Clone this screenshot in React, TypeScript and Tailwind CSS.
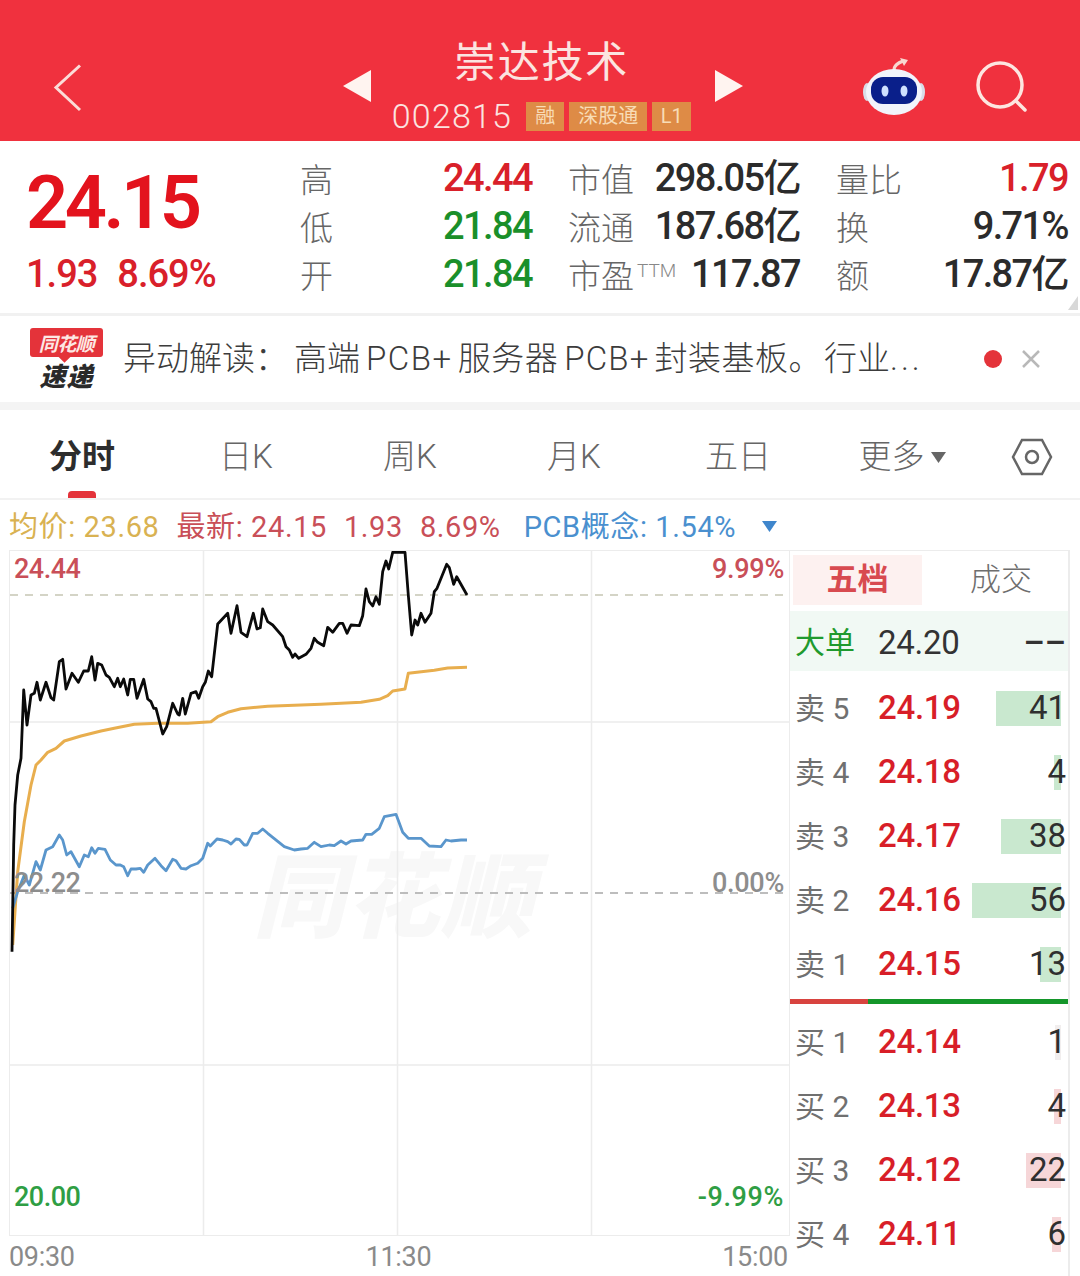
const CJK = "font-['Roboto','Noto_Sans_CJK_SC',sans-serif]";

const toPts = (a: number[], ox = 9, oy = 551 - 545) => {
  const out: string[] = [];
  for (let i = 0; i < a.length; i += 2) out.push(`${(a[i] / 3 - ox).toFixed(1)},${(a[i + 1] / 3 - oy).toFixed(1)}`);
  return out.join(" ");
};

const black = [33,1220,38,900,42,780,50,690,60,640,68,435,78,540,90,450,100,445,108,412,118,465,135,412,150,458,158,465,175,350,185,343,195,432,213,385,232,412,248,378,262,378,272,335,282,405,290,355,302,360,315,390,325,397,340,425,350,400,358,425,368,402,380,450,388,403,398,403,408,460,428,403,440,462,450,470,458,490,465,490,485,567,497,545,515,475,530,507,535,510,545,460,553,507,570,445,585,440,593,460,605,425,613,412,622,378,632,395,650,237,680,205,690,265,708,182,720,262,738,275,757,205,768,252,778,248,785,192,800,230,815,240,845,275,855,305,865,315,875,337,882,327,893,340,915,328,930,310,940,280,950,292,968,302,980,247,995,262,1015,235,1025,235,1038,265,1050,240,1075,242,1085,212,1095,132,1105,170,1115,183,1125,155,1135,178,1145,80,1155,48,1163,72,1175,22,1212,22,1222,150,1232,270,1242,225,1250,240,1260,205,1272,232,1290,205,1300,140,1308,130,1337,58,1345,68,1358,118,1367,95,1398,150];
const orange = [35,1200,50,980,70,830,90,720,105,660,120,645,140,622,165,610,190,588,240,573,300,558,340,550,400,538,470,535,560,535,630,530,650,515,680,502,720,491,800,484,960,478,1080,472,1135,463,1160,452,1175,438,1212,432,1222,385,1300,376,1340,369,1398,367];
const blue = [35,1090,50,1040,70,990,85,1020,105,950,118,975,135,915,155,905,175,870,185,885,197,930,210,920,235,965,250,930,262,935,272,908,282,925,292,910,312,913,328,945,345,960,358,960,368,965,380,992,390,972,405,972,418,970,428,982,440,960,462,940,480,962,495,977,515,943,525,947,540,970,555,972,570,962,590,955,605,940,620,895,628,903,648,882,665,885,680,890,690,897,705,882,715,883,730,900,738,900,755,865,770,865,785,852,800,865,850,905,880,915,900,912,920,910,940,892,960,905,985,900,1000,902,1020,888,1035,897,1050,888,1085,885,1095,868,1112,868,1135,850,1150,815,1185,808,1205,862,1222,880,1260,880,1285,903,1320,905,1335,885,1350,888,1380,885,1398,885];

function Header() {
  return (
    <header className="flex h-[141px] items-center bg-[#f0313e] text-[#fbe4e0]">
      <div className="w-[343px] pl-[53px] pt-[34px]">
        <svg width="30" height="48" viewBox="0 0 30 48" fill="none" stroke="#fbdcd8" strokeWidth="3"><path d="M27 1.500 3 23.500 27 46" /></svg>
      </div>
      <svg className="mt-[30px]" width="28" height="32" viewBox="0 0 28 32" fill="#fff4f0"><path d="M28 0V32L0 16Z" /></svg>
      <div className="flex w-[344px] flex-col items-center pt-[24px]">
        <div className="mr-[3px] h-[60px] text-[42px] leading-[60px] tracking-[1.800px] font-['Noto_Sans_CJK_SC',sans-serif]">崇达技术</div>
        <div className="ml-[-3px] mt-[7px] flex h-[40px] items-center gap-[5px]">
          <span className="mr-[9px] text-[34px] leading-[40px] tracking-[1.200px] font-light font-['Roboto',sans-serif]">002815</span>
          {[["融", "w-[38px]"], ["深股通", "w-[78px]"], ["L1", "w-[39px]"]].map(([t, w]) => (
            <span key={t} className={`${w} flex h-[29px] items-center justify-center bg-[#de8b46] text-[20px] text-[#f8dcb6] font-['Roboto','Noto_Sans_CJK_SC',sans-serif]`}>{t}</span>
          ))}
        </div>
      </div>
      <svg className="mt-[30px]" width="28" height="32" viewBox="0 0 28 32" fill="#fff4f0"><path d="M0 0V32L28 16Z" /></svg>
      <div className="flex flex-1 items-center pl-[119px] pt-[32px]">
        <svg width="64" height="58" viewBox="0 0 64 58">
          <path d="M32 12C32 7 36 5 41 3" fill="none" stroke="#f8d8d0" strokeWidth="3" />
          <path d="M38 0 46 2 42 8Z" fill="#f8d8d0" />
          <ellipse cx="5" cy="34" rx="4" ry="9" fill="#d8dde8" />
          <ellipse cx="59" cy="34" rx="4" ry="9" fill="#d8dde8" />
          <ellipse cx="32" cy="34" rx="28" ry="23" fill="#f2f4fb" />
          <rect x="9" y="19" width="46" height="27" rx="12" fill="#0a1f8a" />
          <ellipse cx="23" cy="33" rx="3.500" ry="5.500" fill="#cfe0ff" />
          <ellipse cx="42" cy="33" rx="3.500" ry="5.500" fill="#cfe0ff" />
        </svg>
        <svg className="ml-[49px]" width="54" height="54" viewBox="0 0 54 54" fill="none" stroke="#fde6e0" strokeWidth="3.500"><circle cx="25" cy="25" r="22" /><path d="M41 41 50 50" strokeLinecap="round" /></svg>
      </div>
    </header>
  );
}

function QItem({ label, value, color, sup }: { label: string; value: string; color: string; sup?: boolean }) {
  return (
    <div className="flex h-[48px] items-center justify-between">
      <span className="flex items-start text-[33px] leading-[48px] text-[#666] font-light font-['Noto_Sans_CJK_SC',sans-serif]">
        {label}
        {sup && <span className="ml-[3px] mt-[-3px] text-[19px] text-[#888] font-['Roboto',sans-serif]">TTM</span>}
      </span>
      <span className={`${color} text-[38px] leading-[48px] tracking-[-1.600px] font-medium font-['Roboto','Noto_Sans_CJK_SC',sans-serif]`}>{value}</span>
    </div>
  );
}

function Quote() {
  const red = "text-[#d9202a]", green = "text-[#1a8f2a]", dark = "text-[#2b2b2b]";
  const rows: [string, string, string, boolean?][][] = [
    [["高", "24.44", red], ["低", "21.84", green], ["开", "21.84", green]],
    [["市值", "298.05亿", dark], ["流通", "187.68亿", dark], ["市盈", "117.87", dark, true]],
    [["量比", "1.79", red], ["换", "9.71%", dark], ["额", "17.87亿", dark]],
  ];
  return (
    <section className="relative flex h-[175px] border-b-[3px] border-[#f1f1f1]">
      <div className="w-[300px] pl-[26px] pt-[24px]">
        <div className="h-[76px] text-[74px] leading-[76px] tracking-[-3.500px] font-semibold text-[#e3131d] font-['Roboto',sans-serif]">24.15</div>
        <div className="mt-[13px] flex gap-[20px] text-[38px] leading-[40px] tracking-[-1px] font-medium text-[#d9202a] font-['Roboto',sans-serif]">
          <span>1.93</span><span>8.69%</span>
        </div>
      </div>
      <div className="grid w-[768px] grid-cols-3 gap-x-[36px] pt-[13px]">
        {rows.map((col, i) => (
          <div key={i} className="flex flex-col">
            {col.map(([l, v, c, s]) => <QItem key={l} label={l} value={v} color={c} sup={s} />)}
          </div>
        ))}
      </div>
      <svg className="absolute bottom-[3px] right-[2px]" width="10" height="14" viewBox="0 0 10 14" fill="#d8d8d8"><path d="M10 0V14H0Z" /></svg>
    </section>
  );
}

function Alert() {
  return (
    <section className="flex h-[94px] items-center border-b-[8px] border-[#f4f4f4]">
      <div className="ml-[30px] flex w-[73px] flex-col items-center">
        <div className="relative flex h-[29px] w-[73px] items-center justify-center rounded-[3px] bg-[#e4333a] text-[19px] italic font-bold leading-[28px] tracking-[-0.500px] text-[#fde8e4] font-['Noto_Sans_CJK_SC',sans-serif]">
          同花顺
          <span className="absolute bottom-[-4px] left-[30px] size-[9px] rotate-45 bg-[#e4333a]" />
        </div>
        <div className="mt-[3px] text-[26px] italic font-black leading-[30px] tracking-[1px] text-[#2a2a2a] font-['Noto_Sans_CJK_SC',sans-serif]">速递</div>
      </div>
      <div className="ml-[20px] flex w-[812px] items-center whitespace-nowrap text-[33px] leading-[44px] text-[#3c3c3c] font-light font-['Roboto','Noto_Sans_CJK_SC',sans-serif]">
        <span>异动解读：</span>
        <span className="ml-[6px]">高端</span>
        <span className="ml-[6px] tracking-[1.500px]">PCB+</span>
        <span className="ml-[5px] tracking-[0.500px]">服务器</span>
        <span className="ml-[6px] tracking-[1.200px]">PCB+</span>
        <span className="ml-[5px] tracking-[0.500px]">封装基板。</span>
        <span className="ml-[2px]">行业</span>
        <span className="tracking-[3px]">...</span>
      </div>
      <span className="ml-[49px] size-[18px] rounded-full bg-[#e4333a]" />
      <svg className="ml-[19px]" width="20" height="20" viewBox="0 0 20 20" stroke="#b8b8b8" strokeWidth="2.500"><path d="M2 2 18 18M18 2 2 18" /></svg>
    </section>
  );
}

function Tabs() {
  const tabs = ["分时", "日K", "周K", "月K", "五日"];
  return (
    <nav className="flex h-[90px] border-b-[2px] border-[#f2f2f2] font-['Roboto','Noto_Sans_CJK_SC',sans-serif]">
      <div className="grid w-[984px] grid-cols-6">
        {tabs.map((t, i) => (
          <div key={t} className={`relative flex items-center justify-center pt-[6px] text-[33px] ${i === 0 ? "font-bold text-[#2d2d2d]" : "font-light text-[#666]"}`}>
            {t}
            {i === 0 && <span className="absolute bottom-0 left-[68px] h-[7px] w-[28px] rounded-t-[4px] bg-[#e4333a]" />}
          </div>
        ))}
        <div className="flex items-center justify-center gap-[6px] pt-[6px] text-[33px] font-light text-[#666]">
          更多
          <svg width="15" height="11" viewBox="0 0 15 11" fill="#666"><path d="M0 0H15L7.500 11Z" /></svg>
        </div>
      </div>
      <div className="flex flex-1 items-center justify-center pt-[6px]">
        <svg width="42" height="38" viewBox="0 0 42 38" fill="none" stroke="#666" strokeWidth="2.500"><path d="M11 2H31L40 19 31 36H11L2 19Z" /><circle cx="21" cy="19" r="6" /></svg>
      </div>
    </nav>
  );
}

function Info() {
  return (
    <div className="flex h-[50px] items-center whitespace-nowrap pl-[9px] pt-[3px] text-[29px] leading-[50px] tracking-[0.600px] font-['Roboto','Noto_Sans_CJK_SC',sans-serif]">
      <span className="text-[#d9b252]">均价: 23.68</span>
      <span className="ml-[17px] text-[#c94f58]">最新: 24.15</span>
      <span className="ml-[17px] text-[#c94f58]">1.93</span>
      <span className="ml-[17px] text-[#c94f58]">8.69%</span>
      <span className="ml-[23px] text-[#4a90cf]">PCB概念: 1.54%</span>
      <svg className="ml-[26px]" width="15" height="11" viewBox="0 0 15 11" fill="#3f86cc"><path d="M0 0H15L7.500 11Z" /></svg>
    </div>
  );
}

function Chart() {
  return (
    <div className="w-[790px]">
      <div className="relative ml-[9px] h-[686px] w-[781px] border border-[#ececec] text-[27px] font-medium font-['Roboto',sans-serif]">
        <div className="absolute left-[243px] top-[291px] select-none text-[92px] italic font-black leading-[96px] tracking-[2px] text-[#f8f8f8] font-['Noto_Sans_CJK_SC',sans-serif]">同花顺</div>
        <svg className="absolute inset-0" width="780" height="685" viewBox="0 0 780 685" fill="none">
          <g stroke="#ececec" strokeWidth="1.500">
            <path d="M193.500 0V685M387.500 0V685M581.500 0V685M0 171H780M0 514H780" />
          </g>
          <path d="M0 44H780" stroke="#c6c6b4" strokeWidth="1.500" strokeDasharray="8 7" />
          <path d="M0 342H780" stroke="#a8a8a8" strokeWidth="1.500" strokeDasharray="8 7" />
          <polyline points={toPts(orange)} stroke="#e8ae4e" strokeWidth="3" strokeLinejoin="round" />
          <polyline points={toPts(blue)} stroke="#5a96cc" strokeWidth="2.800" strokeLinejoin="round" />
          <polyline points={toPts(black)} stroke="#0a0a0a" strokeWidth="2.800" strokeLinejoin="round" />
        </svg>
        <span className="absolute left-[4px] top-[1px] leading-[34px] tracking-[-0.500px] text-[#c94f58]">24.44</span>
        <span className="absolute right-[5px] top-[1px] leading-[34px] tracking-[-0.300px] text-[#c94f58]">9.99%</span>
        <span className="absolute left-[4px] top-[315px] leading-[34px] tracking-[-0.500px] text-[#8d8d8d]">22.22</span>
        <span className="absolute right-[5px] top-[315px] leading-[34px] tracking-[-0.300px] text-[#8d8d8d]">0.00%</span>
        <span className="absolute left-[4px] top-[629px] leading-[34px] tracking-[-0.500px] text-[#2f9e44]">20.00</span>
        <span className="absolute right-[5px] top-[629px] leading-[34px] tracking-[0.600px] text-[#2f9e44]">-9.99%</span>
      </div>
      <div className="ml-[9px] flex h-[39px] items-center justify-between pr-[2px] pt-[3px] text-[27px] tracking-[-0.300px] text-[#8a8a8a] font-['Roboto',sans-serif]">
        <span>09:30</span><span>11:30</span><span>15:00</span>
      </div>
    </div>
  );
}

function BookRow({ label, price, vol, bar, barColor }: { label: string; price: string; vol: string; bar: number; barColor: string }) {
  return (
    <div className="flex h-[64px] shrink-0 items-center pl-[5px] pr-[2px]">
      <span className="w-[83px] whitespace-nowrap text-[30px] text-[#707070]">{label}</span>
      <span className="w-[90px] text-[33px] font-medium tracking-[-0.300px] text-[#d81e28]">{price}</span>
      <span className="relative flex h-[35px] flex-1 items-center justify-end text-[33px] text-[#2f2f2f]">
        <span className={`absolute right-[5px] h-full ${barColor}`} style={{ width: bar }} />
        <span className="relative">{vol}</span>
      </span>
    </div>
  );
}

function Book() {
  const green = "bg-[#c9e8cf]", pink = "bg-[#f6d6d8]", pale = "bg-[#f1eeee]";
  const asks: [string, string, string, number, string][] = [
    ["卖 5", "24.19", "41", 65, green], ["卖 4", "24.18", "4", 7, green], ["卖 3", "24.17", "38", 60, green],
    ["卖 2", "24.16", "56", 89, green], ["卖 1", "24.15", "13", 21, green],
  ];
  const bids: [string, string, string, number, string][] = [
    ["买 1", "24.14", "1", 6, pale], ["买 2", "24.13", "4", 7, pink], ["买 3", "24.12", "22", 35, pink], ["买 4", "24.11", "6", 9, pink],
  ];
  return (
    <aside className="h-[726px] w-[280px] overflow-hidden border-r-[2px] border-t-[1px] border-[#ececec] font-['Roboto','Noto_Sans_CJK_SC',sans-serif]">
      <div className="flex h-[60px] pt-[4px]">
        <div className="ml-[3px] flex h-[50px] w-[129px] items-center justify-center bg-[#fdf1f0] text-[31px] font-bold text-[#d84a50]">五档</div>
        <div className="flex h-[50px] flex-1 items-center justify-center pl-[12px] text-[31px] font-light text-[#6e6e6e]">成交</div>
      </div>
      <div className="flex h-[60px] items-center bg-[#f1f9f4] pl-[5px] pr-[2px] pt-[3px]">
        <span className="w-[83px] text-[30px] text-[#1f9a2e]">大单</span>
        <span className="w-[90px] text-[33px] tracking-[-0.300px] text-[#333]">24.20</span>
        <span className="flex-1 text-right text-[33px] leading-none font-medium text-[#333]">––</span>
      </div>
      <div className="flex flex-col pt-[5px]">
        {asks.map(([l, p, v, b, c]) => <BookRow key={l} label={l} price={p} vol={v} bar={b} barColor={c} />)}
        <div className="mt-[3px] flex h-[5px] shrink-0">
          <span className="h-full w-[78px] bg-[#d8433f]" /><span className="h-full flex-1 bg-[#14962a]" />
        </div>
      </div>
      <div className="flex flex-col pt-[6px]">
        {bids.map(([l, p, v, b, c]) => <BookRow key={l} label={l} price={p} vol={v} bar={b} barColor={c} />)}
      </div>
    </aside>
  );
}

export default function App() {
  return (
    <div className={`h-[1276px] w-[1080px] overflow-hidden bg-white ${CJK}`}>
      <Header />
      <Quote />
      <Alert />
      <Tabs />
      <Info />
      <main className="flex">
        <Chart />
        <Book />
      </main>
    </div>
  );
}
